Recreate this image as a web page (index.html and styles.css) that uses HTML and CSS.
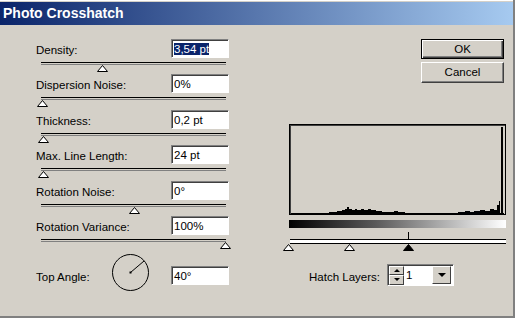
FILE: index.html
```html
<!DOCTYPE html>
<html>
<head>
  <title>Photo Crosshatch</title>
  <link rel="stylesheet" href="styles.css">
</head>
<body>
  <div class="dialog">
    <div class="titlebar">Photo Crosshatch</div>

    <div class="content">
      <div class="controls">
        <div class="row">
          <div class="field">
            <span class="label">Density:</span>
            <div class="textbox"><span class="selected">3,54 pt</span></div>
          </div>
          <div class="slider"><span class="thumb" style="left: 56px"></span></div>
        </div>
        <div class="row">
          <div class="field">
            <span class="label">Dispersion Noise:</span>
            <div class="textbox">0%</div>
          </div>
          <div class="slider"><span class="thumb" style="left: -4px"></span></div>
        </div>
        <div class="row">
          <div class="field">
            <span class="label">Thickness:</span>
            <div class="textbox">0,2 pt</div>
          </div>
          <div class="slider"><span class="thumb" style="left: -3px"></span></div>
        </div>
        <div class="row">
          <div class="field">
            <span class="label">Max. Line Length:</span>
            <div class="textbox">24 pt</div>
          </div>
          <div class="slider"><span class="thumb" style="left: -3px"></span></div>
        </div>
        <div class="row">
          <div class="field">
            <span class="label">Rotation Noise:</span>
            <div class="textbox">0°</div>
          </div>
          <div class="slider"><span class="thumb" style="left: 88px"></span></div>
        </div>
        <div class="row">
          <div class="field">
            <span class="label">Rotation Variance:</span>
            <div class="textbox">100%</div>
          </div>
          <div class="slider"><span class="thumb" style="left: 179px"></span></div>
        </div>

        <div class="angle-row">
          <span class="label angle-label">Top Angle:</span>
          <svg class="dial" width="38" height="38" viewBox="0 0 38 38">
            <circle cx="18.5" cy="18.5" r="18" fill="none" stroke="#000" stroke-width="1"/>
            <line x1="18.5" y1="18.5" x2="32" y2="7" stroke="#000" stroke-width="1"/>
            <rect x="17.5" y="17.5" width="2" height="2" fill="#000"/>
          </svg>
          <div class="textbox">40°</div>
        </div>
      </div>

      <div class="side">
        <div class="buttons">
          <div class="btn default">OK</div>
          <div class="btn">Cancel</div>
        </div>

        <div class="histogram">
          <svg width="215" height="89" viewBox="0 0 215 89">
            <path d="M1 88.5 H214" stroke="#000" stroke-width="1"/>
            <path d="M39 88 V87 H47 V86 H52 V85 H55 V84 H57 V82 H59 V84 H62 V85 H65 V84 H67 V85 H71 V84 H74 V85 H78 V84 H81 V85 H86 V86 H92 V87 H104 V86 H108 V87 H115 V88 Z" fill="#000"/>
            <path d="M168 88 V87 H175 V86 H180 V87 H184 V86 H190 V85 H195 V86 H200 V84 H204 V85 H207 V80 H209 V76 H210 V88 Z" fill="#000"/>
            <path d="M211 88 V2 H213 V88 Z" fill="#000"/>
          </svg>
        </div>

        <div class="ramp"></div>

        <div class="levels">
          <span class="tick"></span>
          <div class="track"></div>
          <span class="thumb" style="left: -6px"></span>
          <span class="thumb" style="left: 55px"></span>
          <span class="thumb solid" style="left: 114px"></span>
        </div>

        <div class="hatch-row">
          <span class="label">Hatch Layers:</span>
          <div class="combo">
            <div class="spin">
              <span class="spin-btn"><i class="arrow-up"></i></span>
              <span class="spin-btn"><i class="arrow-down"></i></span>
            </div>
            <span class="combo-value">1</span>
            <span class="drop-btn"><i class="arrow-down"></i></span>
          </div>
        </div>
      </div>
    </div>
  </div>
</body>
</html>
```

FILE: styles.css
```css
body {
  margin: 0;
  padding: 0;
  background-color: #d4d0c8;
  font-family: "Liberation Sans", Arial, sans-serif;
  font-size: 11.5px;
  color: #000;
}

.dialog {
  width: 515px;
  height: 318px;
  box-sizing: border-box;
  background-color: #d4d0c8;
  padding-top: 2px;
  border-right: 2px solid #808080;
  border-bottom: 2px solid #808080;
  box-shadow: inset 0 1px #fff;
}

.titlebar {
  height: 23px;
  line-height: 23px;
  padding-left: 3px;
  background: linear-gradient(to right, #0a246a, #a6caf0);
  color: #fff;
  font-weight: bold;
  font-size: 14px;
}

.content {
  display: flex;
}

/* left column with the sliders */
.controls {
  padding-left: 36px;
  padding-top: 14px;
  width: 193px;
}

.row {
  height: 35.4px;
}

.field {
  display: flex;
  align-items: center;
  justify-content: space-between;
  height: 19px;
}

.label {
  padding-top: 3px;
}

.textbox {
  width: 58px;
  height: 19px;
  box-sizing: border-box;
  background-color: #fff;
  border: 1px solid;
  border-color: #808080 #fff #fff #808080;
  box-shadow: inset 1px 1px #404040;
  padding: 2px 0 0 2px;
  line-height: 14px;
  white-space: nowrap;
}

.selected {
  background-color: #0a246a;
  color: #fff;
}

.slider {
  position: relative;
  margin: 4px 0 0 5px;
  width: 185px;
  height: 1px;
  border-top: 1px solid #000;
  border-bottom: 1px solid #808080;
}

.thumb {
  position: absolute;
  top: 2px;
  width: 11px;
  height: 7px;
  background: url("data:image/svg+xml,%3Csvg xmlns='http://www.w3.org/2000/svg' width='11' height='7'%3E%3Cpolygon points='5.5,0.5 10.5,6.5 0.5,6.5' fill='%23fff' stroke='%23000' stroke-width='1'/%3E%3C/svg%3E");
}

.thumb.solid {
  background: url("data:image/svg+xml,%3Csvg xmlns='http://www.w3.org/2000/svg' width='11' height='7'%3E%3Cpolygon points='5.5,0.5 10.5,6.5 0.5,6.5' fill='%23000' stroke='%23000' stroke-width='1'/%3E%3C/svg%3E");
}

.angle-row {
  display: flex;
  align-items: center;
  margin-top: 3px;
  height: 38px;
}

.angle-label {
  width: 76px;
  padding-top: 8px;
}

.angle-row .textbox {
  margin-left: auto;
  margin-top: 4px;
}

/* right column */
.side {
  margin-left: 60px;
  padding-top: 14px;
  width: 217px;
}

.buttons {
  display: flex;
  flex-direction: column;
  align-items: flex-end;
  gap: 3px;
  padding-right: 2px;
}

.btn {
  width: 83px;
  height: 21px;
  box-sizing: border-box;
  text-align: center;
  line-height: 19px;
  border: 1px solid;
  border-color: #fff #404040 #404040 #fff;
  box-shadow: inset -1px -1px #808080;
}

.btn.default {
  height: 20px;
  line-height: 18px;
  border-color: #000;
  box-shadow: inset 1px 1px #fff, inset -1px -1px #404040, inset -2px -2px #808080;
}

.histogram {
  margin-top: 41px;
  height: 91px;
  box-sizing: border-box;
  border: 1px solid #000;
  box-shadow: inset 1px 1px #404040;
}

.histogram svg {
  display: block;
}

.ramp {
  margin-top: 5px;
  height: 8px;
  background: linear-gradient(to right, #000, #5a5a5a 40%, #fff);
}

.levels {
  position: relative;
  height: 36px;
}

.tick {
  position: absolute;
  left: 119px;
  top: 4px;
  width: 1px;
  height: 7px;
  background-color: #000;
}

.track {
  position: absolute;
  left: 1px;
  right: 0;
  top: 11px;
  height: 3px;
  background-color: #fff;
  border-top: 1px solid #000;
  border-bottom: 1px solid #000;
}

.levels .thumb {
  top: 16px;
}

.hatch-row {
  display: flex;
  align-items: center;
  padding-left: 20px;
}

.hatch-row .label {
  width: 78px;
}

.combo {
  display: flex;
  align-items: center;
  width: 67px;
  height: 22px;
  box-sizing: border-box;
  background-color: #fff;
  border: 1px solid;
  border-color: #808080 #fff #fff #808080;
  box-shadow: inset 1px 1px #404040;
  padding: 1px;
}

.spin {
  display: flex;
  flex-direction: column;
  width: 15px;
  height: 19px;
}

.spin-btn,
.drop-btn {
  display: flex;
  align-items: center;
  justify-content: center;
  box-sizing: border-box;
  background-color: #d4d0c8;
  border: 1px solid;
  border-color: #fff #404040 #404040 #fff;
}

.spin-btn {
  height: 9.5px;
}

.combo-value {
  flex: 1;
  padding-left: 2px;
  line-height: 18px;
}

.drop-btn {
  width: 19px;
  height: 18px;
  margin-right: 1px;
}

.arrow-up,
.arrow-down {
  width: 0;
  height: 0;
  border-left: 3px solid transparent;
  border-right: 3px solid transparent;
}

.arrow-up {
  border-bottom: 3px solid #000;
}

.arrow-down {
  border-top: 3px solid #000;
}

.drop-btn .arrow-down {
  border-left-width: 4px;
  border-right-width: 4px;
  border-top-width: 4px;
}
```
